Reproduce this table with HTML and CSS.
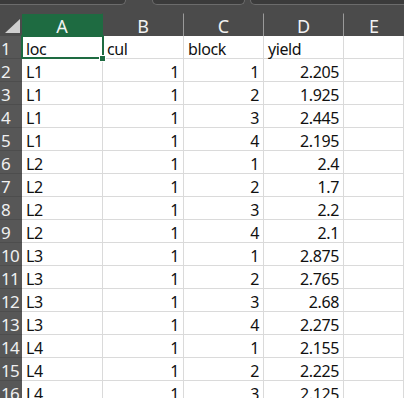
FILE: index.html
```html
<!DOCTYPE html>
<html>
<head>
<meta charset="utf-8">
<link rel="stylesheet" href="styles.css">
</head>
<body>
<div class="app">
  <div class="topbar">
    <div class="box box1"></div>
    <div class="box box2"></div>
    <div class="box box3"></div>
  </div>
  <div class="sheet">
    <div class="corner"><svg class="tri" width="22" height="23" viewBox="0 0 22 23"><polygon points="20,6 20,20 5,20" fill="#cfcfcf"/></svg></div>
    <div class="colh active">A</div>
    <div class="colh">B</div>
    <div class="colh">C</div>
    <div class="colh">D</div>
    <div class="colh last">E</div>

    <div class="rowh">1</div><div class="c sel">loc</div><div class="c">cul</div><div class="c">block</div><div class="c">yield</div><div class="c"></div>
    <div class="rowh">2</div><div class="c">L1</div><div class="c n">1</div><div class="c n">1</div><div class="c n">2.205</div><div class="c"></div>
    <div class="rowh">3</div><div class="c">L1</div><div class="c n">1</div><div class="c n">2</div><div class="c n">1.925</div><div class="c"></div>
    <div class="rowh">4</div><div class="c">L1</div><div class="c n">1</div><div class="c n">3</div><div class="c n">2.445</div><div class="c"></div>
    <div class="rowh">5</div><div class="c">L1</div><div class="c n">1</div><div class="c n">4</div><div class="c n">2.195</div><div class="c"></div>
    <div class="rowh">6</div><div class="c">L2</div><div class="c n">1</div><div class="c n">1</div><div class="c n">2.4</div><div class="c"></div>
    <div class="rowh">7</div><div class="c">L2</div><div class="c n">1</div><div class="c n">2</div><div class="c n">1.7</div><div class="c"></div>
    <div class="rowh">8</div><div class="c">L2</div><div class="c n">1</div><div class="c n">3</div><div class="c n">2.2</div><div class="c"></div>
    <div class="rowh">9</div><div class="c">L2</div><div class="c n">1</div><div class="c n">4</div><div class="c n">2.1</div><div class="c"></div>
    <div class="rowh">10</div><div class="c">L3</div><div class="c n">1</div><div class="c n">1</div><div class="c n">2.875</div><div class="c"></div>
    <div class="rowh">11</div><div class="c">L3</div><div class="c n">1</div><div class="c n">2</div><div class="c n">2.765</div><div class="c"></div>
    <div class="rowh">12</div><div class="c">L3</div><div class="c n">1</div><div class="c n">3</div><div class="c n">2.68</div><div class="c"></div>
    <div class="rowh">13</div><div class="c">L3</div><div class="c n">1</div><div class="c n">4</div><div class="c n">2.275</div><div class="c"></div>
    <div class="rowh">14</div><div class="c">L4</div><div class="c n">1</div><div class="c n">1</div><div class="c n">2.155</div><div class="c"></div>
    <div class="rowh">15</div><div class="c">L4</div><div class="c n">1</div><div class="c n">2</div><div class="c n">2.225</div><div class="c"></div>
    <div class="rowh">16</div><div class="c">L4</div><div class="c n">1</div><div class="c n">3</div><div class="c n">2.125</div><div class="c"></div>
  </div>
</div>
</body>
</html>
```

FILE: styles.css
```css
html, body {
  margin: 0;
  padding: 0;
  background: #ffffff;
}

.app {
  width: 404px;
  height: 398px;
  overflow: hidden;
  font-family: "Noto Sans", "Liberation Sans", sans-serif;
}

.topbar {
  height: 13px;
  background: #4b4b4b;
  display: flex;
  align-items: flex-start;
  overflow: hidden;
}

.box {
  height: 4px;
  background: #3b3b3b;
  border: 1px solid #6c6c6c;
  border-top: none;
  border-radius: 0 0 5px 5px;
  flex: none;
}

.box1 {
  margin-left: -10px;
  width: 134px;
}

.box2 {
  margin-left: 26px;
  width: 91px;
}

.box3 {
  margin-left: 5px;
  width: 200px;
}

.sheet {
  display: grid;
  grid-template-columns: 22px 81px 81px 80px 80px 1fr;
  grid-auto-rows: 23px;
}

.corner {
  background: #4b4b4b;
  position: relative;
}

.tri {
  display: block;
}

.colh {
  background: #4b4b4b;
  color: #f2f2f2;
  font-size: 18px;
  display: flex;
  align-items: center;
  justify-content: center;
  box-sizing: border-box;
  border-right: 1px solid #9a9a9a;
  border-top: 1px solid #4b4b4b;
  line-height: 1;
  padding-top: 1px;
}

.colh.active {
  background: #1e6b41;
  border-right-color: #1e6b41;
}

.colh.last {
  border-right: none;
}

.rowh {
  background: #575757;
  color: #f0f0f0;
  font-size: 17px;
  letter-spacing: -0.8px;
  line-height: 1;
  box-sizing: border-box;
  border-bottom: 1px solid #4d4d4d;
  padding-left: 1px;
  display: flex;
  align-items: center;
  padding-top: 2px;
  overflow: hidden;
  white-space: nowrap;
}

.c {
  box-sizing: border-box;
  border-right: 1px solid #dadada;
  border-bottom: 1px solid #dadada;
  font-size: 16px;
  letter-spacing: -0.4px;
  line-height: 16px;
  color: #111111;
  display: flex;
  align-items: flex-end;
  padding: 0 4px 1px 4px;
  white-space: nowrap;
}

.c.n {
  justify-content: flex-end;
}

.sel {
  position: relative;
}

.sel::after {
  content: "";
  position: absolute;
  left: -1px;
  top: -1px;
  right: -2px;
  bottom: -1px;
  border: 2px solid #1e6b41;
}

.sel::before {
  content: "";
  position: absolute;
  right: -4px;
  bottom: -4px;
  width: 5px;
  height: 5px;
  background: #1e6b41;
  border: 1px solid #ffffff;
  z-index: 2;
}
```
